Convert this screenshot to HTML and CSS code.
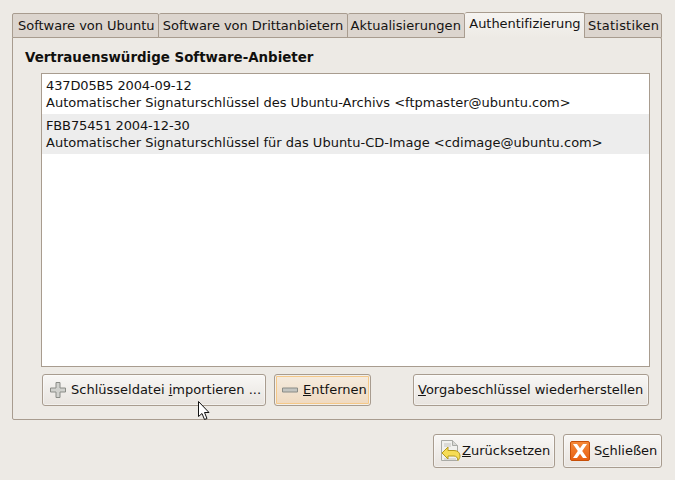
FILE: index.html
```html
<!DOCTYPE html>
<html lang="de">
<head>
<meta charset="utf-8">
<title>Software-Paketquellen</title>
<link rel="stylesheet" href="styles.css">
</head>
<body>
<div class="window">
  <div class="notebook">
    <div class="tabs">
      <div class="tab tab-1">Software von Ubuntu</div>
      <div class="tab tab-2">Software von Drittanbietern</div>
      <div class="tab tab-3">Aktualisierungen</div>
      <div class="tab tab-active">Authentifizierung</div>
      <div class="tab tab-5">Statistiken</div>
    </div>
    <div class="panel">
      <h2 class="title">Vertrauenswürdige Software-Anbieter</h2>
      <div class="list">
        <div class="row"><span class="key">437D05B5 2004-09-12</span><br>Automatischer Signaturschlüssel des Ubuntu-Archivs &lt;ftpmaster@ubuntu.com&gt;</div>
        <div class="row row-alt"><span class="key">FBB75451 2004-12-30</span><br>Automatischer Signaturschlüssel für das Ubuntu-CD-Image &lt;cdimage@ubuntu.com&gt;</div>
      </div>
      <div class="actions">
        <button class="btn btn-import">
          <svg class="icon" width="16" height="16" viewBox="0 0 16 16"><path d="M6 .5h4v5.500h5.500v4H10v5.500H6V10H.5V6H6z" fill="#d0d1cd" stroke="#8a8c87"/></svg>
          <span>Schlüsseldatei <u>i</u>mportieren ...</span>
        </button>
        <button class="btn btn-remove">
          <svg class="icon" width="16" height="16" viewBox="0 0 16 16"><path d="M.5 6h15v4H.5z" fill="#c3c4c0" stroke="#8a8c87"/></svg>
          <span><u>E</u>ntfernen</span>
        </button>
        <button class="btn btn-restore"><span><u>V</u>orgabeschlüssel wiederherstellen</span></button>
      </div>
    </div>
  </div>
  <div class="footer">
    <button class="btn btn-footer btn-revert">
      <svg class="icon" width="21" height="22" viewBox="0 0 21 22">
        <path d="M1.5.5h11l5 5v15h-16z" fill="#f1f1ee" stroke="#a9aaa5"/>
        <path d="M12.5.5v5h5" fill="#d8d8d4" stroke="#a9aaa5"/>
        <path d="M4 4h7M4 6h7M4 19h12" stroke="#c4c4c0"/>
        <path d="M2 13l6-6v3.500h6c4 0 6 2.500 6 5.500 0 2-1 3-2 4.500 0-3-2-4.500-4-4.500H8V19z" fill="#f6dc55" stroke="#b59a1c"/>
      </svg>
      <span><u>Z</u>urücksetzen</span>
    </button>
    <button class="btn btn-footer btn-close">
      <svg class="icon" width="20" height="20" viewBox="0 0 20 20">
        <defs><linearGradient id="closeFill" x1="0" y1="0" x2="0" y2="1"><stop offset="0" stop-color="#f58a3a"/><stop offset="1" stop-color="#e85f10"/></linearGradient></defs>
        <rect x=".5" y=".5" width="19" height="19" rx="1.500" fill="url(#closeFill)" stroke="#c64f08"/>
        <path d="M3 3h4l3 4.200L13 3h4l-4.800 7L17 17h-4l-3-4.300L7 17H3l4.800-7z" fill="#fff"/>
      </svg>
      <span>S<u>c</u>hließen</span>
    </button>
  </div>
  <svg class="cursor" width="14" height="22" viewBox="0 0 14 22"><path d="M1.500 1.500v15l3.500-3 2.500 6 2.500-1-2.500-6h4.500z" fill="#fff" stroke="#111"/></svg>
</div>
</body>
</html>
```
FILE: styles.css
```css
* { box-sizing: border-box; }
html, body { margin: 0; padding: 0; }
body {
  width: 675px;
  height: 480px;
  overflow: hidden;
  background: #edeae5;
  color: #141312;
  font-family: "DejaVu Sans", sans-serif;
  font-size: 13px;
  line-height: 16px;
}
.window {
  position: relative;
  width: 675px;
  height: 480px;
  padding: 12px 13px 13px 12px;
  display: flex;
  flex-direction: column;
}
.tabs {
  display: flex;
  align-items: flex-end;
  height: 26px;
  position: relative;
  z-index: 1;
  margin-bottom: -1px;
}
.tab {
  height: 25px;
  background: #dcd5ce;
  border: 1px solid #a89c8f;
  border-radius: 2px 2px 0 0;
  padding: 4px 0 0 5px;
  white-space: nowrap;
}
.tab + .tab { border-left: 0; }
.tab-1 { width: 147px; letter-spacing: -.03px; }
.tab-2 { width: 190px; padding-left: 4px; letter-spacing: -.03px; }
.tab-3 { width: 117px; padding-left: 2px; letter-spacing: .05px; }
.tab-5 { width: 78px; letter-spacing: .2px; }
.tab-active {
  width: 120px;
  height: 26px;
  border-left: 1px solid #a89c8f;
  border-bottom: 0;
  padding: 3px 0 0 4px;
  margin-right: -1px;
  background: linear-gradient(#f6f4f1, #edeae5);
  letter-spacing: -.05px;
}
.tab-active + .tab { border-left: 1px solid #a89c8f; padding-left: 3px; }
.panel {
  width: 650px;
  height: 383px;
  border: 1px solid #a89c8f;
  border-radius: 0 2px 2px 2px;
  padding: 12px 12px 12px 11px;
  display: flex;
  flex-direction: column;
}
.title {
  margin: 0 0 0 1px;
  font-size: 13.4px;
  font-weight: bold;
  line-height: 16px;
  color: #11100e;
}
.list {
  width: 609px;
  height: 294px;
  margin: 7px 0 0 17px;
  background: #fff;
  border: 1px solid #a89c8f;
}
.row {
  height: 40px;
  padding: 3px 4px 0 4px;
  line-height: 17px;
  white-space: nowrap;
}
.row-alt { background: #ededed; }
.key { letter-spacing: -.14px; }
.actions {
  display: flex;
  height: 32px;
  margin: 7px 0 0 18px;
}
.btn {
  display: flex;
  align-items: center;
  height: 32px;
  padding: 0;
  font: inherit;
  color: inherit;
  white-space: nowrap;
  border: 1px solid #a89c8f;
  border-radius: 3px;
  background: linear-gradient(#f8f7f5, #e8e4df);
  box-shadow: inset 0 0 0 1px rgba(255, 255, 255, .45);
}
.icon { flex: none; display: block; }
.btn-import { width: 224px; padding-left: 7px; gap: 5px; }
.btn-remove {
  width: 97px;
  margin-left: 8px;
  padding-left: 7px;
  gap: 5px;
  background: linear-gradient(#f5ece0, #efd9bf);
  box-shadow: inset 0 0 0 1px #f2f0ec, inset 0 0 0 2px #f5c888;
}
.btn-restore { width: 236px; margin-left: 42px; padding-left: 4px; }
.footer {
  display: flex;
  justify-content: flex-end;
  gap: 8px;
  margin-top: 14px;
}
.btn-footer { height: 34px; }
.btn-revert { width: 122px; padding-left: 6px; gap: 1px; }
.btn-close { width: 99px; padding-left: 6px; gap: 4px; }
.cursor {
  position: absolute;
  left: 197px;
  top: 400px;
}
```
